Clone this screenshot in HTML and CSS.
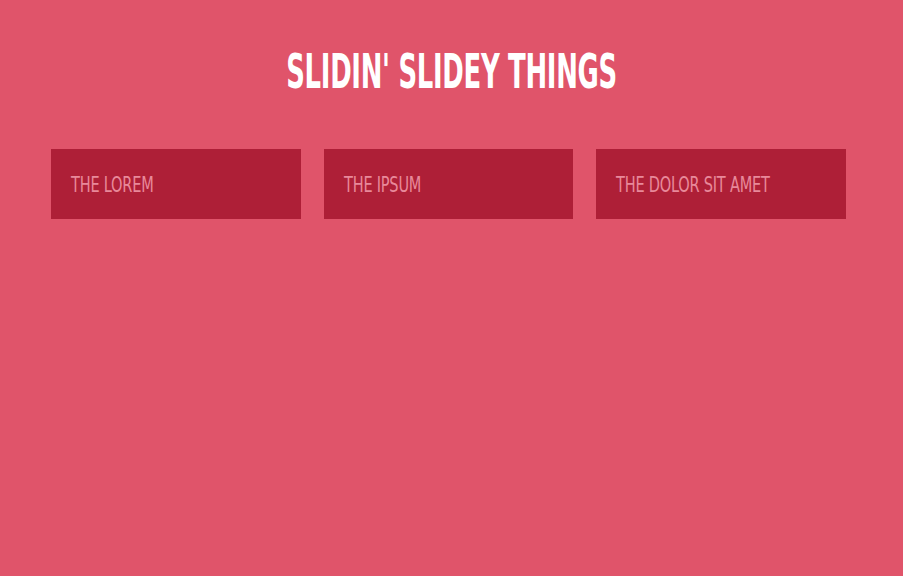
FILE: index.html
```html
<!DOCTYPE html>
<html>
<head>
<meta charset="utf-8">
<link rel="stylesheet" href="styles.css">
</head>
<body>
<div class="header"><h1 class="title">SLIDIN' SLIDEY THINGS</h1></div>
<div class="row">
  <div class="card"><span class="label">THE LOREM</span></div>
  <div class="card"><span class="label">THE IPSUM</span></div>
  <div class="card"><span class="label">THE DOLOR SIT AMET</span></div>
</div>
</body>
</html>
```
FILE: styles.css
```css
html, body {
  margin: 0;
  padding: 0;
  height: 100%;
}
body {
  background: #e0546a;
  font-family: "DejaVu Sans Condensed", "DejaVu Sans", sans-serif;
}
.header {
  display: flex;
  justify-content: center;
  padding-top: 44px;
}
.title {
  margin: 0;
  display: inline-block;
  color: #ffffff;
  font-size: 48px;
  font-weight: bold;
  line-height: 54px;
  letter-spacing: -0.5px;
  white-space: nowrap;
  transform: scaleX(0.6);
  transform-origin: center;
}
.row {
  display: flex;
  gap: 23px;
  padding: 51px 57px 0 51px;
}
.card {
  width: 250px;
  height: 70px;
  background: #ae1f37;
  display: flex;
  align-items: center;
  padding-left: 20px;
  box-sizing: border-box;
}
.label {
  display: inline-block;
  color: #e8899a;
  font-size: 22px;
  letter-spacing: -0.3px;
  white-space: nowrap;
  transform: scaleX(0.735);
  transform-origin: left center;
}
```
